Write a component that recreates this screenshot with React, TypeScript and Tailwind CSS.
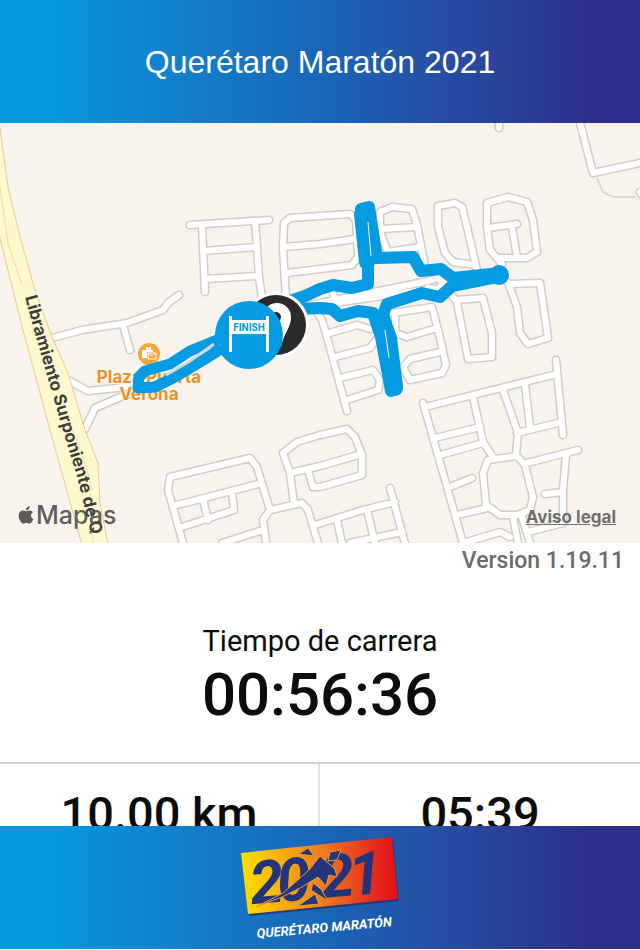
import { FaApple } from "react-icons/fa";

const roads = [
  "M52 338L82 330L127 323L163 310L168 303L179 295",
  "M123 325L130 350",
  "M68 380L88 391L117 388L138 384",
  "M85 429L95 408L123 396L142 389",
  "M190 225L269 220M202 225L205 292M255 222L257 247L259 277L262 298M204 251L257 247M205 279L258 276",
  "M286 299L283 248L284 223L290 218L320 216L350 214L356 220L358 257L352 265L320 269L287 273M283 247L320 244L355 239",
  "M425 266L417 225L412 209L392 207L380 212L380 232L388 252L420 247M380 229L417 227",
  "M477 270L467 227L462 207L455 203L438 206L438 227L445 253L453 262L475 265",
  "M502 264L490 250L487 227L487 203L508 197L527 202L533 220L537 252L527 258L498 258M488 228L517 224M512 227L517 257",
  "M505 280L510 284L540 283L548 338L528 344L520 333L517 307L509 285",
  "M449 293L456 300L483 298L492 333L492 357L468 359L463 333L457 303",
  "M306 306L428 281M335 303L430 289M333 293L335 303M428 281L438 278L444 283L438 289L428 288",
  "M313 306L322 320L327 337L347 411M326 334L357 325L370 329M335 357L370 348L376 340M340 378L373 370L380 380L378 390L347 400",
  "M393 313L432 307L440 338L446 365L442 373L410 380L403 367L410 359L440 352M395 314L395 333L407 337L437 328",
  "M423 403L463 543M425 407L557 374M556 360L563 435M562 422L517 433M525 385L530 427M503 390L518 433L516 455M473 397L483 442L493 457",
  "M435 438L480 427M440 455L483 443M488 460L517 456L525 465L533 497L530 510L517 515L500 515L486 505L483 473ZM527 463L578 450",
  "M566 455L563 490L563 523L528 532M563 492L545 494M450 487L472 478M457 515L487 508M513 517L518 543M522 517L530 543M463 543L500 532L510 537",
  "M390 488L405 543M315 525L363 510L395 502M337 520L342 543M367 510L375 543M350 543L402 532",
  "M183 543L168 490L170 477L250 458L257 467L270 510L302 503L308 510L318 543M173 506L262 483M203 499L208 520M232 492L234 510L182 527M270 510L263 520L266 543M222 543L263 530",
  "M294 504L290 473L283 453L297 442L320 435L347 429L355 437L362 455L362 475L320 487L313 487L308 470M290 473L320 466L362 454",
  "M580 123L593 173L640 163M499 120L499 128M640 192L644 198",
];

const route =
  "M290 301L305 296L320 289L333 285L352 288L368 284L368 262L361 209L369 207L377 258L413 257L421 271L441 269L453 278L500 273L497 277L452 286L440 297L422 293L387 304L383 315L391 338L397 387L391 391L381 337L373 313L358 311L340 316L332 309L320 308L296 309";

function RouteMap() {
  return (
    <svg
      className="block h-full w-full"
      viewBox="0 123 640 420"
      preserveAspectRatio="xMidYMid slice"
      role="img"
      aria-label="Mapa del recorrido"
    >
      <rect y="123" width="640" height="420" fill="#f8f4ed" />
      <path d="M597 178L603 192L613 197L636 197" fill="none" stroke="#dedad3" strokeWidth="2" />
      <g fill="none" strokeLinejoin="round" strokeLinecap="round">
        {roads.map((d) => (
          <path key={d} d={d} stroke="#d2cdc8" strokeWidth="9" />
        ))}
        {roads.map((d) => (
          <path key={d} d={d} stroke="#ffffff" strokeWidth="6" />
        ))}
      </g>
      <path
        d="M-2 115L0 128L8 187L20 237L35 290L52 337L68 373L85 430L98 463L100 503L108 545L82 545L50 430L23 330L0 238L-4 220Z"
        fill="#fdf8ce"
        stroke="#f2c48f"
        strokeWidth="1"
      />
      <path
        d="M0 187L8 243L22 285M62 412L80 463L90 490L93 543M66 412L86 466L92 490"
        fill="none"
        stroke="#f5d6a0"
        strokeWidth="1"
      />
      <path id="highway" d="M25 297L35 334L64 434L78 480L102 580" fill="none" />
      <text
        fontFamily="Inter, sans-serif"
        fontWeight="700"
        fontSize="17"
        fill="#3e3e3e"
        stroke="#fdf8ce"
        strokeWidth="2"
        paintOrder="stroke"
      >
        <textPath href="#highway">Libramiento Surponiente de Q</textPath>
      </text>

      <circle cx="149" cy="354" r="11" fill="#f9a63a" />
      <path d="M146 350v-3h5v3h2v2h-6v6h-5v-8z" fill="#ffffff" />
      <path d="M148 353h8v6h-8zM148 353l4 3l4-3" fill="#f9a63a" stroke="#ffffff" strokeWidth="1" />
      <g
        fontFamily="Inter, sans-serif"
        fontWeight="700"
        fontSize="17"
        fill="#ef9226"
        stroke="#fbf7f0"
        strokeWidth="2"
        paintOrder="stroke"
        textAnchor="middle"
      >
        <text x="149" y="383">Plaza Puerta</text>
        <text x="149" y="400">Verona</text>
      </g>

      <g fill="none" stroke="#059be3" strokeLinejoin="round" strokeLinecap="round">
        <path d={route} strokeWidth="12" />
        <path d="M455 281L495 276" strokeWidth="14" />
        <path d="M362 214L367 262M387 338L395 388" strokeWidth="16" />
        <path d="M499 275L499 275" strokeWidth="20" />
        <path
          d="M222 338L190 351L170 364L145 371L139 377L138 388L155 387L175 377L205 359L224 347"
          strokeWidth="11"
        />
      </g>
      <path d="M166 375L190 361L214 344" fill="none" stroke="#d8d8d8" strokeWidth="3" />
      <path d="M368 222L371 256M385 330L389 358" fill="none" stroke="#f8f4ed" strokeWidth="1" />

      <circle cx="276" cy="325" r="33" fill="#ffffff" />
      <circle cx="276" cy="325" r="30" fill="#2b2b2b" />
      <path d="M277 303a14 14 0 0 1 14 14c0 10-6 14-10 30c-6-14-18-20-18-30a14 14 0 0 1 14-14z" fill="#fff" />
      <circle cx="276" cy="317" r="5" fill="#2b2b2b" />
      <circle cx="249" cy="335" r="34" fill="#059be3" />
      <path d="M229 316h3v4h34v-4h3v36h-3v-18h-34v18h-3z" fill="#ffffff" />
      <text
        x="249"
        y="331"
        textAnchor="middle"
        fontFamily="Roboto, sans-serif"
        fontWeight="700"
        fontSize="10"
        fill="#059be3"
      >
        FINISH
      </text>
    </svg>
  );
}

function EventLogo() {
  return (
    <svg className="h-[115px] w-[164px]" viewBox="238 829 164 115" role="img" aria-label="Querétaro Maratón 2021">
      <defs>
        <linearGradient id="badge" x1="0" x2="1" y1="0" y2="0">
          <stop offset="0" stopColor="#fde000" />
          <stop offset="0.5" stopColor="#f0801f" />
          <stop offset="0.85" stopColor="#e62b1c" />
          <stop offset="1" stopColor="#e4101b" />
        </linearGradient>
      </defs>
      <path d="M244 853L393 838L399 900L249 915Z" fill="#233a78" />
      <path d="M241 852L392 836L398 898L248 913Z" fill="url(#badge)" />
      <g
        transform="rotate(-5 255 905)"
        fontFamily="Roboto, sans-serif"
        fontWeight="700"
        fontStyle="italic"
        fontSize="60"
        fill="#22347c"
      >
        <text x="252" y="903">2</text>
        <text x="279" y="903">0</text>
        <text x="323" y="903">2</text>
        <text x="351" y="903">1</text>
      </g>
      <g fill="#22347c" stroke="#f29a22" strokeWidth="1" strokeLinejoin="round">
        <path d="M256 906L283 892L299 878L310 868L320 855L335 868L337 876L329 874L326 885L318 876L302 886L282 896Z" />
        <path d="M299 853L308 847L314 855Z" />
        <path d="M313 882L321 888L328 900L311 889Z" />
        <path d="M298 905L315 893L319 903Z" />
        <path d="M330 851L341 849L337 859L328 860Z" />
      </g>
      <text
        x="257"
        y="937"
        transform="rotate(-5 257 937)"
        fontFamily="Roboto, sans-serif"
        fontWeight="700"
        fontStyle="italic"
        fontSize="13"
        fill="#ffffff"
      >
        QUERÉTARO MARATÓN
      </text>
    </svg>
  );
}

export default function App() {
  return (
    <div className="flex h-screen flex-col overflow-hidden bg-white pb-px font-[Roboto,sans-serif] text-[#0c0c0c]">
      <header className="flex h-[123px] shrink-0 items-center justify-center bg-linear-to-r from-[#0398de] from-8% via-[#1b60b3] via-55% to-[#2d2f8b] to-92%">
        <h1 className="font-['Liberation_Sans',sans-serif] text-[32px] leading-10 text-white">
          Querétaro Maratón 2021
        </h1>
      </header>

      <main className="flex min-h-0 flex-1 flex-col">
        <section className="relative h-[420px] shrink-0 overflow-hidden">
          <RouteMap />
          <div className="absolute bottom-3 left-4 flex items-center font-[Inter,sans-serif] text-[25px] leading-8 font-medium text-[#4a4a4a]/90">
            <FaApple className="size-5" aria-hidden="true" />
            <span>Mapas</span>
          </div>
          <a
            href="#legal"
            className="absolute right-6 bottom-4 font-[Inter,sans-serif] text-[17px] leading-5 font-bold text-[#6f6f6f] underline"
          >
            Aviso legal
          </a>
        </section>

        <p className="shrink-0 px-4 pt-0.5 text-right text-[23px] leading-8 font-medium text-[#6b6b6b]">
          Version 1.19.11
        </p>

        <section className="flex h-[187px] shrink-0 flex-col items-center border-b-2 border-[#d0d0d0] pt-[46px]">
          <h2 className="text-[29px] leading-9">Tiempo de carrera</h2>
          <p className="text-[60px] leading-[72px] font-medium">00:56:36</p>
        </section>

        <section className="grid min-h-0 flex-1 grid-cols-2 overflow-hidden text-center text-[47px] leading-[52px] font-medium">
          <p className="border-r-2 border-[#e2e2e2] pt-6">10.00 km</p>
          <p className="pt-6">05:39</p>
        </section>
      </main>

      <footer className="flex h-[123px] shrink-0 items-center justify-center bg-linear-to-r from-[#0398de] from-8% via-[#1b60b3] via-55% to-[#2d2f8b] to-92%">
        <EventLogo />
      </footer>
    </div>
  );
}
